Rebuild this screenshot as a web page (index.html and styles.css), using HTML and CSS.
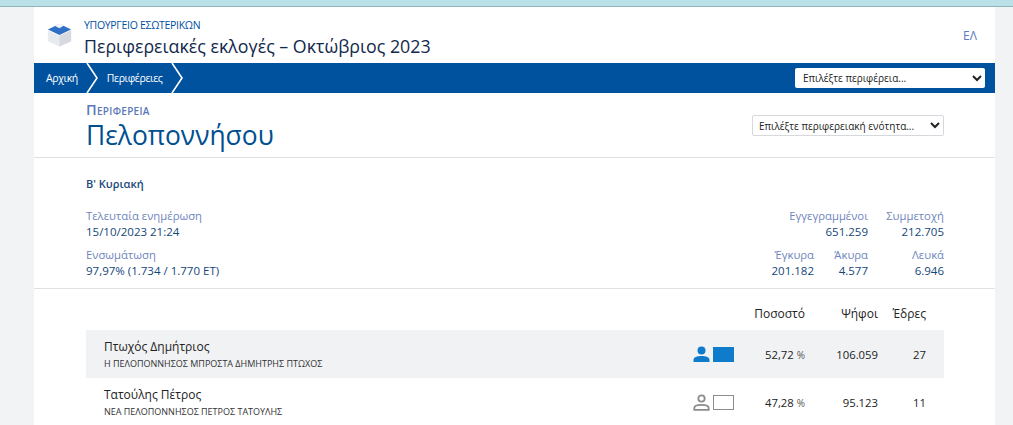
FILE: index.html
```html
<!DOCTYPE html>
<html lang="el">
<head>
<meta charset="utf-8">
<title>Περιφερειακές εκλογές</title>
<link rel="stylesheet" href="styles.css">
</head>
<body>
<div class="topstrip"></div>
<main class="page">
  <header class="head">
    <div class="brand">
      <svg class="logo" width="25" height="26" viewBox="0 0 28 28">
        <path d="M1 10 L14 16 L27 10 V22 L14 28 L1 22 Z" fill="#e8ebee"/>
        <path d="M14 16 L27 10 V22 L14 28 Z" fill="#d6dade"/>
        <path d="M1 9 L13 3 L15 3 L27 9 L14 15 Z" fill="#2f6fc4"/>
        <path d="M9 5 L14 2 L19 4.500 L14 7.500 Z" fill="#f2f4f6"/>
      </svg>
      <div class="brand-text">
        <div class="ministry">ΥΠΟΥΡΓΕΙΟ ΕΣΩΤΕΡΙΚΩΝ</div>
        <div class="title">Περιφερειακές εκλογές – Οκτώβριος 2023</div>
      </div>
    </div>
    <a class="lang">ΕΛ</a>
  </header>
  <nav class="nav">
    <a class="crumb crumb-first">Αρχική</a>
    <svg class="chev" width="14" height="30" viewBox="0 0 14 30"><path d="M1 0 L11 15 L1 30" fill="none" stroke="#fff" stroke-width="1.600"/></svg>
    <a class="crumb crumb-second">Περιφέρειες</a>
    <svg class="chev" width="14" height="30" viewBox="0 0 14 30"><path d="M1 0 L11 15 L1 30" fill="none" stroke="#fff" stroke-width="1.600"/></svg>
    <select class="nav-select"><option>Επιλέξτε περιφέρεια...</option></select>
  </nav>
  <section class="region">
    <div>
      <div class="region-label">Περιφέρεια</div>
      <h1 class="region-name">Πελοποννήσου</h1>
    </div>
    <select class="unit-select"><option>Επιλέξτε περιφερειακή ενότητα...</option></select>
  </section>
  <section class="stats">
    <div class="round">Β' Κυριακή</div>
    <div class="stats-grid">
      <div class="stats-left">
        <div class="stat"><div class="k">Τελευταία ενημέρωση</div><div class="v">15/10/2023 21:24</div></div>
        <div class="stat"><div class="k">Ενσωμάτωση</div><div class="v">97,97% (1.734 / 1.770 ΕΤ)</div></div>
      </div>
      <div class="stats-right">
        <div class="stat s1"><div class="k">Εγγεγραμμένοι</div><div class="v">651.259</div></div>
        <div class="stat s2"><div class="k">Συμμετοχή</div><div class="v">212.705</div></div>
        <div class="stat"><div class="k">Έγκυρα</div><div class="v">201.182</div></div>
        <div class="stat"><div class="k">Άκυρα</div><div class="v">4.577</div></div>
        <div class="stat"><div class="k">Λευκά</div><div class="v">6.946</div></div>
      </div>
    </div>
  </section>
  <section class="results">
    <div class="row row-head">
      <div class="c-main"></div><div class="c-icons"></div>
      <div class="c-pct">Ποσοστό</div><div class="c-votes">Ψήφοι</div><div class="c-seats">Έδρες</div>
    </div>
    <div class="row row-cand row-win">
      <div class="c-main"><div class="name">Πτωχός Δημήτριος</div><div class="party">Η ΠΕΛΟΠΟΝΝΗΣΟΣ ΜΠΡΟΣΤΑ ΔΗΜΗΤΡΗΣ ΠΤΩΧΟΣ</div></div>
      <div class="c-icons">
        <svg width="17" height="17" viewBox="0 0 17 17"><circle cx="8.500" cy="4.500" r="4" fill="#0f7ccb"/><path d="M0.500 16 V14 C0.500 11 4 10 8.500 10 C13 10 16.500 11 16.500 14 V16 Z" fill="#0f7ccb"/></svg>
        <span class="box box-on"></span>
      </div>
      <div class="c-pct"><span>52,72</span> <small>%</small></div><div class="c-votes">106.059</div><div class="c-seats">27</div>
    </div>
    <div class="row row-cand">
      <div class="c-main"><div class="name">Τατούλης Πέτρος</div><div class="party">ΝΕΑ ΠΕΛΟΠΟΝΝΗΣΟΣ ΠΕΤΡΟΣ ΤΑΤΟΥΛΗΣ</div></div>
      <div class="c-icons">
        <svg width="17" height="17" viewBox="0 0 17 17"><circle cx="8.500" cy="4.500" r="3.200" fill="none" stroke="#8c8c8c" stroke-width="1.800"/><path d="M1.300 15.800 V14 C1.300 11.800 4.500 10.800 8.500 10.800 C12.500 10.800 15.700 11.800 15.700 14 V15.800 Z" fill="none" stroke="#8c8c8c" stroke-width="1.800"/></svg>
        <span class="box"></span>
      </div>
      <div class="c-pct"><span>47,28</span> <small>%</small></div><div class="c-votes">95.123</div><div class="c-seats">11</div>
    </div>
  </section>
</main>
</body>
</html>
```
FILE: styles.css
```css
* { box-sizing: border-box; }
html, body { margin: 0; padding: 0; height: 425px; overflow: hidden; }
body { background: #f1f3f5; font-family: "Open Sans", "Noto Sans", sans-serif; color: #1f2a37; }
.topstrip { height: 7px; background: #b9e1e7; border-bottom: 1px solid #8fb4ba; }
.page { width: 961px; margin-left: 34px; background: #fff; height: 418px; }
.head { height: 56px; display: flex; justify-content: space-between; padding: 7px 18px 0 13px; }
.brand { display: flex; gap: 12px; }
.logo { margin-top: 7px; }
.ministry { font-size: 10.500px; color: #004f9f; line-height: 14px; letter-spacing: -0.3px; margin-top: 4px; }
.title { font-size: 17.800px; font-weight: 500; color: #12294b; line-height: 24px; margin-top: 2px; }
.lang { color: #5a7cc0; font-size: 12px; font-weight: 500; margin-top: 13px; }
.nav { height: 30px; background: #00529f; display: flex; align-items: center; padding-right: 10px; color: #fff; }
.crumb { color: #fff; font-size: 10.500px; letter-spacing: -0.4px; }
.crumb-first { margin-left: 12px; margin-right: 8px; }
.crumb-second { margin-left: 7px; margin-right: 9px; }
.chev { flex: none; }
select { font-family: inherit; color: #222; background: #fff; appearance: auto; }
.nav-select { margin-left: auto; width: 190px; height: 20px; border: 0; border-radius: 2px; font-size: 10px; padding-left: 4px; }
.region { height: 65px; padding: 9px 51px 0 52px; display: flex; justify-content: space-between; align-items: flex-start; border-bottom: 1px solid #dfe2e5; }
.region-label { font-size: 14.500px; letter-spacing: 0.3px; font-variant: small-caps; font-weight: 600; color: #5b78b8; line-height: 16px; }
.region-name { margin: 0; font-size: 26.400px; font-weight: 400; color: #004f8f; line-height: 34px; }
.unit-select { width: 192px; height: 21px; margin-top: 13px; border: 1px solid #d5d9dd; border-radius: 2px; font-size: 10px; padding-left: 2px; }
.stats { height: 131px; padding: 18px 51px 0 52px; border-bottom: 1px solid #dfe2e5; }
.round { font-size: 11px; font-weight: 600; color: #1a4a7a; line-height: 16px; }
.stats-grid { display: flex; justify-content: space-between; margin-top: 16px; }
.stats-left { display: flex; flex-direction: column; gap: 8px; }
.stats-right { display: grid; grid-template-columns: 54px 54px 76px; row-gap: 8px; justify-items: end; }
.s1 { grid-column: 1 / 3; }
.s2 { grid-column: 3; }
.k { font-size: 11.300px; line-height: 16px; color: #6f86bd; }
.v { font-size: 11.500px; line-height: 15px; color: #14467a; font-weight: 500; }
.stats-left .k, .stats-left .v { text-align: left; }
.stats-right .stat { text-align: right; }
.row { display: flex; margin-left: 52px; width: 858px; align-items: center; }
.row-head { height: 41px; font-size: 12px; font-weight: 500; color: #222; padding-top: 8px; }
.row-cand { height: 48px; font-size: 11.300px; color: #222; }
.row-win { background: #f0f2f4; }
.c-main { flex: 1; padding-left: 18px; }
.c-icons { width: 42px; display: flex; gap: 3px; align-items: center; justify-content: flex-end; }
.c-pct { width: 71px; text-align: right; }
.c-pct small { font-size: 10px; color: #555; }
.c-votes { width: 73px; text-align: right; }
.c-seats { width: 66px; text-align: right; padding-right: 18px; }
.name { font-size: 12px; line-height: 17px; color: #222; }
.party { font-size: 9px; line-height: 12px; color: #333; margin-top: 3px; }
.box { display: inline-block; width: 21px; height: 15px; border: 1px solid #8c8c8c; background: #fff; }
.box-on { background: #0f7ccb; border-color: #0f7ccb; }
```
